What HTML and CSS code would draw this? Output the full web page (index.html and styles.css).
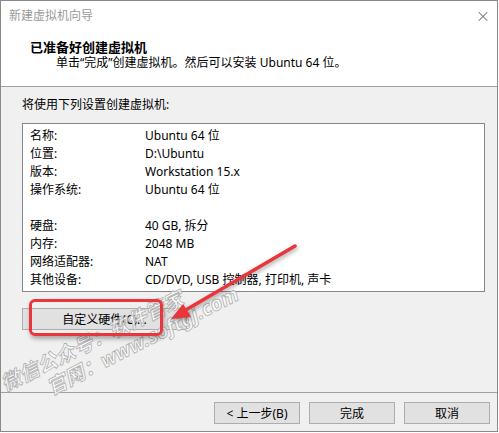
FILE: index.html
```html
<!doctype html>
<html lang="zh-CN">
<head>
<meta charset="UTF-8">
<title>新建虚拟机向导</title>
<link rel="stylesheet" href="styles.css">
</head>
<body>
	<div class="window">
		<!-- 标题栏 -->
		<div class="titlebar">
			<span class="title">新建虚拟机向导</span>
			<span class="close"></span>
		</div>

		<!-- 向导头部 -->
		<div class="header">
			<div class="head_title">已准备好创建虚拟机</div>
			<div class="head_sub">单击“完成”创建虚拟机。然后可以安装 Ubuntu 64 位。</div>
		</div>

		<div class="content">
			<div class="caption">将使用下列设置创建虚拟机:</div>
			<div class="summary">
				<div class="row"><span class="key">名称:</span><span>Ubuntu 64 位</span></div>
				<div class="row"><span class="key">位置:</span><span>D:\Ubuntu</span></div>
				<div class="row"><span class="key">版本:</span><span>Workstation 15.x</span></div>
				<div class="row"><span class="key">操作系统:</span><span>Ubuntu 64 位</span></div>
				<div class="row"></div>
				<div class="row"><span class="key">硬盘:</span><span>40 GB, 拆分</span></div>
				<div class="row"><span class="key">内存:</span><span>2048 MB</span></div>
				<div class="row"><span class="key">网络适配器:</span><span>NAT</span></div>
				<div class="row"><span class="key">其他设备:</span><span>CD/DVD, USB 控制器, 打印机, 声卡</span></div>
			</div>
			<button class="btn btn_custom">自定义硬件(C)...</button>
		</div>

		<div class="footer">
			<button class="btn">&lt; 上一步(B)</button>
			<button class="btn">完成</button>
			<button class="btn">取消</button>
		</div>

		<!-- 截图上的标注和水印 -->
		<div class="watermark wm1">微信公众号：软件管家</div>
		<div class="watermark wm2">官网：www.softgj.com</div>
		<div class="mark_box"></div>
		<svg class="mark_arrow" width="498" height="432" viewBox="0 0 498 432">
			<line x1="295" y1="246" x2="184" y2="311" stroke="#e8363b" stroke-width="3.5" stroke-linecap="round"/>
			<polygon points="171,319 183,304 191,317" fill="#e8363b"/>
		</svg>
	</div>
</body>
</html>
```

FILE: styles.css
```css
body{
	margin:0;
	background:#ffffff;
	font-family:"Noto Sans", "Noto Sans CJK SC", sans-serif;
	font-size:12px;
	color:#000000;
}
.window{
	position:relative;
	width:498px; height:432px;
	box-sizing:border-box;
	border:1px solid #8a8a8a;
	background:#f0f0f0;
	display:flex; flex-direction:column;
	overflow:hidden;
}
.titlebar{
	height:30px;
	background:#ffffff;
	display:flex; align-items:center; justify-content:space-between;
	padding:0 9px 0 8px;
}
.title{
	color:#9a9a9a; line-height:16px;
}
.close{
	position:relative;
	width:10px; height:10px;
}
.close::before, .close::after{
	content:""; position:absolute;
	left:-1px; top:4.5px; width:12px; height:1px;
	background:#707070;
	transform:rotate(45deg);
}
.close::after{
	transform:rotate(-45deg);
}
.header{
	height:56px;
	box-sizing:border-box;
	background:#ffffff;
	border-bottom:1px solid #a0a0a0;
	padding:8px 0 0 29px;
}
.head_title{
	font-weight:bold; font-size:13px; line-height:16px;
}
.head_sub{
	line-height:16px; padding-left:26px;
}
.content{
	flex:1;
	padding:10px 12px 0 21px;
}
.caption{
	line-height:16px;
}
.summary{
	margin-top:10px;
	height:169px;
	box-sizing:border-box;
	border:1px solid #828790;
	background:#ffffff;
	padding:3px 0 0 7px;
}
.row{
	display:flex;
	height:18px; line-height:18px;
}
.key{
	width:115px;
}
.btn{
	font-family:"Noto Sans", "Noto Sans CJK SC", sans-serif;
	font-size:12px; color:#000000;
	height:22px; width:86px;
	padding:0;
	background:#e1e1e1;
	border:1px solid #adadad;
}
.btn_custom{
	width:165px;
	margin-top:16px;
}
.footer{
	border-top:1px solid #a0a0a0;
	padding:9px 7px 7px 0;
	display:flex; justify-content:flex-end; gap:9px;
}
.mark_box{
	position:absolute;
	left:28px; top:298px;
	width:128px; height:31px;
	border:3px solid #e8363b;
	border-radius:6px;
	box-shadow:1px 3px 4px rgba(0,0,0,0.3);
}
.mark_arrow{
	position:absolute; left:-1px; top:-1px;
	filter:drop-shadow(1px 2px 2px rgba(0,0,0,0.35));
}
.watermark{
	position:absolute;
	font-family:"Noto Sans", "Noto Sans CJK SC", sans-serif;
	font-size:20px; line-height:22px;
	font-weight:bold; font-style:italic;
	color:rgba(255,255,255,0.75);
	-webkit-text-stroke:0.8px #b0b0b0;
	white-space:nowrap;
	transform-origin:left bottom;
}
.wm1{
	left:6px; top:372px;
	transform:rotate(-26deg);
}
.wm2{
	left:52px; top:376px;
	transform:rotate(-27deg);
}
```
